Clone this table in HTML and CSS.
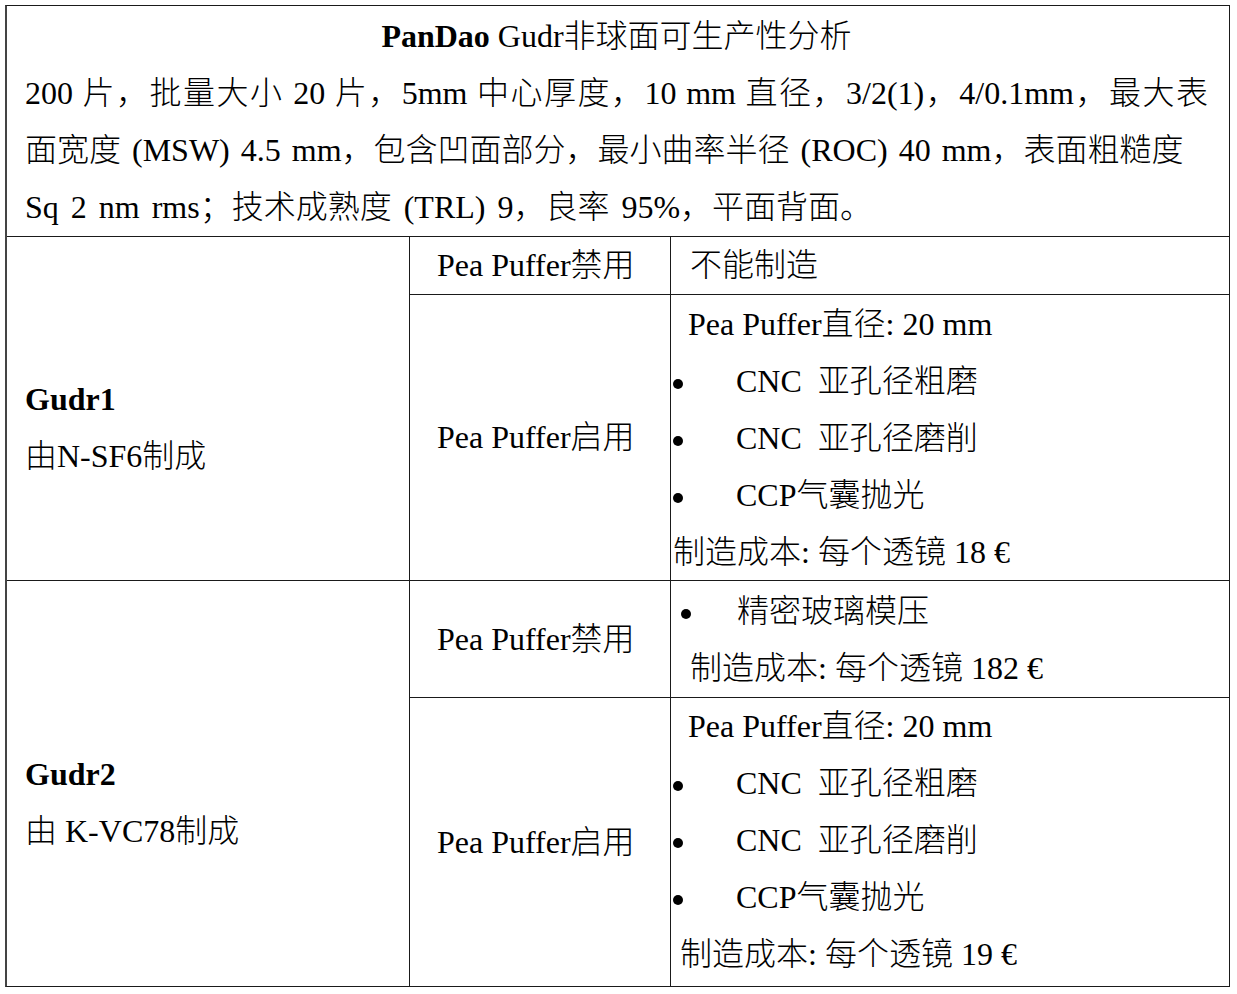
FILE: index.html
```html
<!DOCTYPE html>
<html lang="zh-CN">
<head>
<meta charset="utf-8">
<title>PanDao Gudr非球面可生产性分析</title>
<link rel="stylesheet" href="styles.css">
</head>
<body>
<div class="sheet">
  <div class="cell head">
    <div class="title"><b>PanDao</b> Gudr非球面可生产性分析</div>
    <div class="jl">200 片，批量大小 20 片，5mm 中心厚度，10 mm 直径，3/2(1)，4/0.1mm，最大表</div>
    <div class="ws3">面宽度 (MSW) 4.5 mm，包含凹面部分，最小曲率半径 (ROC) 40 mm，表面粗糙度</div>
    <div class="ws">Sq 2 nm rms；技术成熟度 (TRL) 9，良率 95%，平面背面。</div>
  </div>

  <div class="cell lens g1">
    <div class="name">Gudr1</div>
    <div>由N-SF6制成</div>
  </div>
  <div class="cell mode m1a">Pea Puffer禁用</div>
  <div class="cell res r1a"><div class="pl19">不能制造</div></div>
  <div class="cell mode m1b">Pea Puffer启用</div>
  <div class="cell res r1b">
    <div class="pl17">Pea Puffer直径: 20 mm</div>
    <div class="item"><span class="dot"></span><span>CNC&nbsp; 亚孔径粗磨</span></div>
    <div class="item"><span class="dot"></span><span>CNC&nbsp; 亚孔径磨削</span></div>
    <div class="item"><span class="dot"></span><span>CCP气囊抛光</span></div>
    <div class="pl2">制造成本: 每个透镜 18 €</div>
  </div>

  <div class="cell lens g2">
    <div class="name">Gudr2</div>
    <div>由 K-VC78制成</div>
  </div>
  <div class="cell mode m2a">Pea Puffer禁用</div>
  <div class="cell res r2a">
    <div class="item inset"><span class="dot"></span><span>精密玻璃模压</span></div>
    <div class="pl19">制造成本: 每个透镜 182 €</div>
  </div>
  <div class="cell mode m2b">Pea Puffer启用</div>
  <div class="cell res r2b">
    <div class="pl17">Pea Puffer直径: 20 mm</div>
    <div class="item"><span class="dot"></span><span>CNC&nbsp; 亚孔径粗磨</span></div>
    <div class="item"><span class="dot"></span><span>CNC&nbsp; 亚孔径磨削</span></div>
    <div class="item"><span class="dot"></span><span>CCP气囊抛光</span></div>
    <div class="pl9">制造成本: 每个透镜 19 €</div>
  </div>
</div>
</body>
</html>
```

FILE: styles.css
```css
html, body {
  margin: 0;
  background: #fff;
}

body {
  font-family: "Liberation Serif", "Noto Sans CJK SC", serif;
  font-size: 32px;
  font-weight: 300;
  color: #000;
}

.sheet {
  margin: 5px;
  width: 1222px;
  display: grid;
  grid-template-columns: 402px 260px 558px;
  grid-template-rows: 230px 57px 285px 116px 288px;
  gap: 1px;
  background: #1a1a1a;
  border: 1px solid #1a1a1a;
  border-left: 2px solid #444;
}

.cell {
  background: #fff;
  line-height: 57px;
  white-space: nowrap;
}

.head {
  grid-column: 1 / 4;
  padding: 2px 21px 0 18px;
}

.title {
  text-align: center;
}

.title b {
  font-weight: bold;
}

.jl {
  text-align: justify;
  text-align-last: justify;
}

.ws {
  word-spacing: 4px;
}

.ws3 {
  word-spacing: 3px;
}

.lens {
  display: flex;
  flex-direction: column;
  justify-content: center;
  padding: 38px 0 0 18px;
}

.name {
  font-weight: bold;
}

.g1 { grid-column: 1; grid-row: 2 / 4; }
.g2 { grid-column: 1; grid-row: 4 / 6; }

.mode {
  display: flex;
  align-items: center;
  padding-left: 27px;
}

.m1a { grid-column: 2; grid-row: 2; }
.m1b { grid-column: 2; grid-row: 3; }
.m2a { grid-column: 2; grid-row: 4; }
.m2b { grid-column: 2; grid-row: 5; }

.r1a { grid-column: 3; grid-row: 2; }
.r1b { grid-column: 3; grid-row: 3; padding-top: 1px; }
.r2a { grid-column: 3; grid-row: 4; padding-top: 2px; }
.r2b { grid-column: 3; grid-row: 5; }

.pl2 { padding-left: 2px; }
.pl9 { padding-left: 9px; }
.pl17 { padding-left: 17px; }
.pl19 { padding-left: 19px; }

.item {
  display: flex;
  align-items: center;
}

.dot {
  flex: none;
  width: 10px;
  height: 10px;
  border-radius: 50%;
  background: #000;
  margin-left: 2px;
  margin-right: 53px;
  position: relative;
  top: 2px;
}

.item.inset .dot {
  margin-left: 10px;
  margin-right: 46px;
}
```
